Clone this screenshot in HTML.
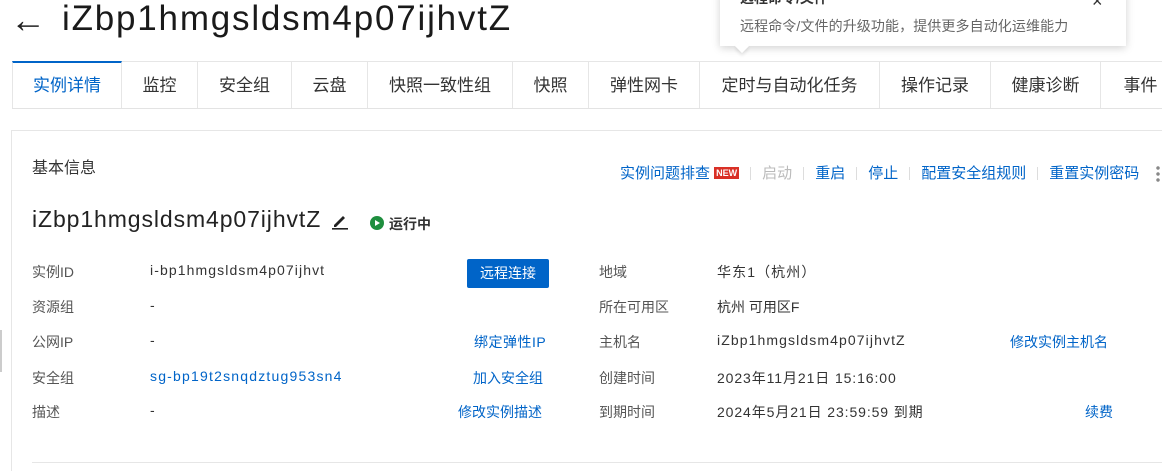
<!DOCTYPE html>
<html><head><meta charset="utf-8"><style>
*{margin:0;padding:0;box-sizing:border-box}
html,body{width:1162px;height:471px;overflow:hidden}
body{background:#fff;font-family:"Liberation Sans","Noto Sans CJK SC",sans-serif;color:#333;position:relative}
.a{position:absolute;white-space:nowrap}
.tabs{position:absolute;left:12px;top:61px;height:48px;width:1160px;border-bottom:1px solid #e3e3e3}
.tab{position:absolute;top:0;height:47px;border:1px solid #e6e6e6;border-bottom:none;border-left:none;font-size:17px;color:#333;text-align:center;line-height:48px;background:#fff}
.tab.on{color:#0064c8;border-top:2px solid #0064c8;border-left:1px solid #e6e6e6;line-height:46px}
.lbl{font-size:14px;color:#555}
.val{font-size:14px;color:#333;letter-spacing:1.1px}
.lnk{font-size:14px;color:#0064c8}
.sep{display:inline-block;width:1px;height:13px;background:#ddd;margin:0 11px;vertical-align:-2px}
</style></head><body>
<div class="a" style="left:10px;top:0;font-size:36px;color:#222;line-height:40px">←</div>
<div class="a" style="left:62px;top:-3px;font-size:35px;color:#1a1a1a;line-height:44px;letter-spacing:1.8px">iZbp1hmgsldsm4p07ijhvtZ</div>
<div class="a" style="left:720px;top:-10px;width:406px;height:56px;background:#fff;box-shadow:0 2px 8px rgba(0,0,0,.18)"></div>
<div class="a" style="left:737px;top:41px;width:10px;height:10px;background:#fff;transform:rotate(45deg);box-shadow:2px 2px 3px rgba(0,0,0,.1)"></div>
<div class="a" style="left:740px;top:-12px;font-size:14px;font-weight:bold;color:#333">远程命令/文件</div>
<div class="a" style="left:1092px;top:-9px;font-size:18px;color:#333">×</div>
<div class="a" style="left:740px;top:16px;font-size:14px;color:#666;letter-spacing:0.1px">远程命令/文件的升级功能，提供更多自动化运维能力</div>
<div class="tabs">
<div class="tab on" style="left:0;width:110px">实例详情</div>
<div class="tab" style="left:110px;width:76px">监控</div>
<div class="tab" style="left:186px;width:94px">安全组</div>
<div class="tab" style="left:280px;width:76px">云盘</div>
<div class="tab" style="left:356px;width:145px">快照一致性组</div>
<div class="tab" style="left:501px;width:76px">快照</div>
<div class="tab" style="left:577px;width:111px">弹性网卡</div>
<div class="tab" style="left:688px;width:180px">定时与自动化任务</div>
<div class="tab" style="left:868px;width:111px">操作记录</div>
<div class="tab" style="left:979px;width:110px">健康诊断</div>
<div class="tab" style="left:1089px;width:80px">事件</div>
</div>
<div class="a" style="left:11px;top:130px;width:1160px;height:360px;border:1px solid #e6e6e6"></div>
<div class="a" style="left:0;top:330px;width:2px;height:42px;background:#ccc"></div>
<div class="a" style="left:32px;top:154px;font-size:16px;color:#333">基本信息</div>
<div class="a" style="left:620px;top:162px;font-size:15px;color:#0064c8">实例问题排查 <span style="display:inline-block;background:#d93026;color:#fff;font-size:9px;font-weight:bold;padding:0 2px;line-height:12px;vertical-align:2px">NEW</span><span class="sep"></span><span style="color:#bbb">启动</span><span class="sep"></span>重启<span class="sep"></span>停止<span class="sep"></span>配置安全组规则<span class="sep"></span>重置实例密码</div>
<div class="a" style="left:1156px;top:165px;width:4px;height:18px;background:radial-gradient(circle,#888 1.5px,transparent 2px) 0 0/4px 6px"></div>
<div class="a" style="left:32px;top:206px;font-size:23px;color:#222;letter-spacing:0.9px">iZbp1hmgsldsm4p07ijhvtZ</div>
<svg class="a" style="left:331px;top:212px" width="18" height="18" viewBox="0 0 18 18"><path d="M3 13 L12 4 L14 6 L5 15 L3 15Z" fill="#222"/><rect x="1" y="16" width="16" height="1.6" fill="#222"/></svg>
<svg class="a" style="left:370px;top:216px" width="14" height="14"><circle cx="7" cy="7" r="7" fill="#1e8e3e"/><path d="M5 4 L10 7 L5 10Z" fill="#fff"/></svg>
<div class="a" style="left:389px;top:214px;font-size:14px;font-weight:bold;color:#333">运行中</div>
<div class="a lbl" style="left:32px;top:262px">实例ID</div><div class="a val" style="left:150px;top:262px">i-bp1hmgsldsm4p07ijhvt</div>
<div class="a" style="left:467px;top:259px;width:82px;height:29px;background:#0064c8;border-radius:2px;color:#fff;font-size:14px;text-align:center;line-height:29px">远程连接</div>
<div class="a lbl" style="left:32px;top:297px">资源组</div><div class="a val" style="left:150px;top:297px">-</div>
<div class="a lbl" style="left:32px;top:332px">公网IP</div><div class="a val" style="left:150px;top:332px">-</div><div class="a lnk" style="left:474px;top:332px;letter-spacing:0.5px">绑定弹性IP</div>
<div class="a lbl" style="left:32px;top:368px">安全组</div><div class="a lnk" style="left:150px;top:368px;letter-spacing:1.2px">sg-bp19t2snqdztug953sn4</div><div class="a lnk" style="left:473px;top:368px">加入安全组</div>
<div class="a lbl" style="left:32px;top:402px">描述</div><div class="a val" style="left:150px;top:402px">-</div><div class="a lnk" style="left:458px;top:402px">修改实例描述</div>
<div class="a lbl" style="left:599px;top:262px">地域</div><div class="a val" style="left:717px;top:262px">华东1（杭州）</div>
<div class="a lbl" style="left:599px;top:297px">所在可用区</div><div class="a val" style="left:717px;top:297px;letter-spacing:0">杭州 可用区F</div>
<div class="a lbl" style="left:599px;top:332px">主机名</div><div class="a val" style="left:717px;top:332px">iZbp1hmgsldsm4p07ijhvtZ</div><div class="a lnk" style="left:1010px;top:332px">修改实例主机名</div>
<div class="a lbl" style="left:599px;top:368px">创建时间</div><div class="a val" style="left:717px;top:368px;letter-spacing:0.9px">2023年11月21日 15:16:00</div>
<div class="a lbl" style="left:599px;top:402px">到期时间</div><div class="a val" style="left:717px;top:402px;letter-spacing:0.9px">2024年5月21日 23:59:59 到期</div><div class="a lnk" style="left:1085px;top:402px">续费</div>
<div class="a" style="left:32px;top:462px;width:1130px;height:1px;background:#e6e6e6"></div>
</body></html>
